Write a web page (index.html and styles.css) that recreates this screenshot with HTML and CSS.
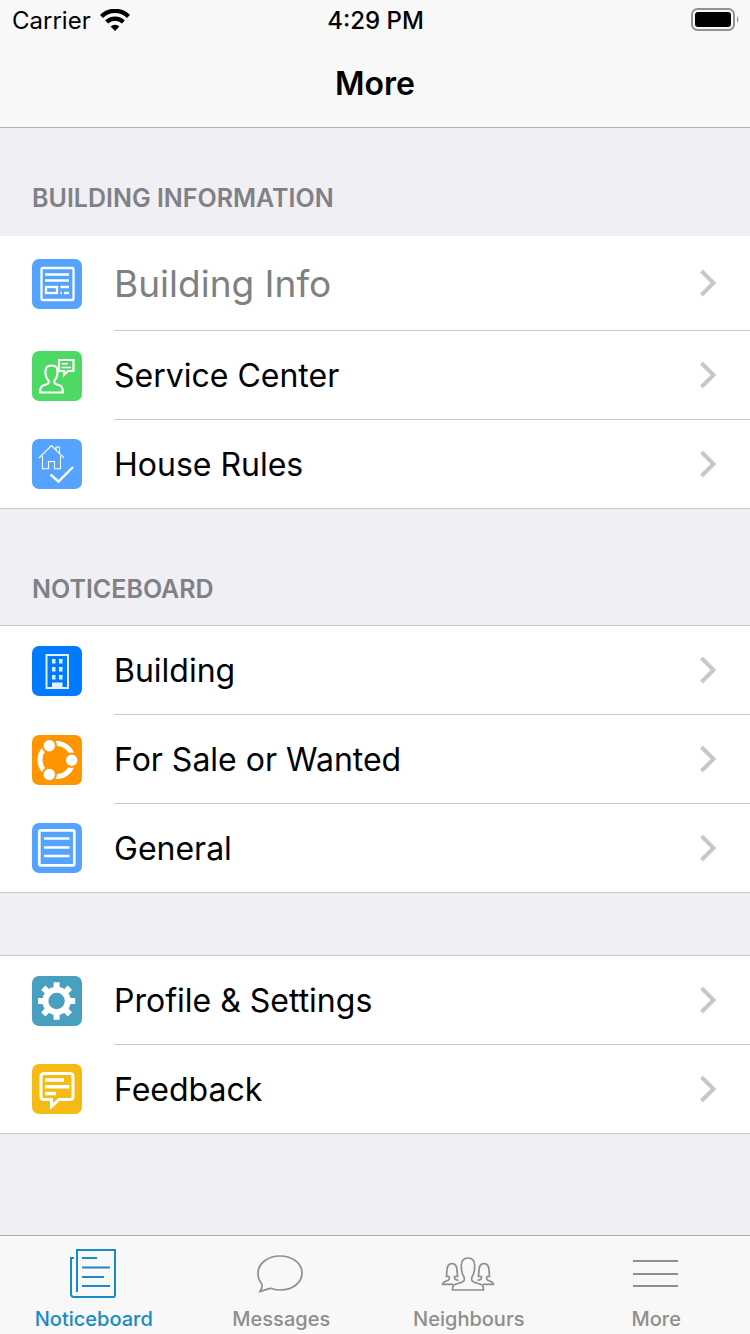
FILE: index.html
```html
<!DOCTYPE html>
<html lang="en">
<head>
    <meta charset="UTF-8">
    <meta name="viewport" content="width=device-width, initial-scale=1.0">
    <title>More</title>
    <link rel="stylesheet" href="styles.css">
</head>
<body>
    <svg class="sprite" aria-hidden="true">
        <symbol id="chevron" viewBox="0 0 20 30">
            <path d="M3.5 3 L15.5 15 L3.5 27" fill="none" stroke="#c7c7cc" stroke-width="4"/>
        </symbol>
    </svg>

    <header class="header">
        <div class="status-bar">
            <div class="carrier">
                <span>Carrier</span>
                <svg width="30" height="22" viewBox="0 0 30 22">
                    <path d="M1.5 7.5 A19 19 0 0 1 28.5 7.5" fill="none" stroke="#000" stroke-width="4.4"/>
                    <path d="M6.6 13 A12 12 0 0 1 23.4 13" fill="none" stroke="#000" stroke-width="4.2"/>
                    <path d="M15 22 L10.6 17.4 A6.5 6.5 0 0 1 19.4 17.4 Z"/>
                </svg>
            </div>
            <div class="time">4:29 PM</div>
            <div class="battery">
                <svg width="48" height="24" viewBox="0 0 48 24">
                    <rect x="1" y="1" width="42" height="21" rx="5.5" fill="none" stroke="#929292" stroke-width="2"/>
                    <rect x="4" y="4" width="36" height="15" rx="3"/>
                    <path d="M46 8 A5 5 0 0 1 46 15 Z" fill="#929292"/>
                </svg>
            </div>
        </div>
        <h1>More</h1>
    </header>

    <main>
        <h2>BUILDING INFORMATION</h2>
        <ul class="list list-first">
            <li>
                <a class="row row-large" href="#">
                    <svg class="icon blue" viewBox="0 0 50 50" fill="none" stroke="#fff" stroke-width="2.3">
                        <rect x="9.5" y="9" width="32" height="32" rx="1.5"/>
                        <path d="M13 15.5 H37 M13 21.5 H37 M28.5 28 H37 M32 34 H37"/>
                        <path d="M28.5 34 H30"/>
                        <rect x="14" y="28" width="11" height="6"/>
                    </svg>
                    <span class="row-body">Building Info <svg class="chevron"><use href="#chevron"/></svg></span>
                </a>
            </li>
            <li>
                <a class="row" href="#">
                    <svg class="icon green" viewBox="0 0 50 50" fill="none" stroke="#fff" stroke-width="2.2">
                        <path d="M8 41.5 C8 36 10 34.5 14 33.5 C17 32.7 17 31 16.5 29.5 C14 27 13.4 24 13.4 20.5 C13.4 16.5 16 14.5 19.5 14.5 C23 14.5 25.6 16.5 25.6 20.5 C25.6 24 25 27 22.5 29.5 C22 31 22 32.7 25 33.5 C29 34.5 31 36 31 41.5 Z"/>
                        <path d="M27 9 H41.5 V20 H36 L32 24 V20 H27 Z"/>
                        <path d="M29.5 12.7 H36 M29.5 16.5 H39" stroke-width="1.5"/>
                    </svg>
                    <span class="row-body">Service Center <svg class="chevron"><use href="#chevron"/></svg></span>
                </a>
            </li>
            <li>
                <a class="row" href="#">
                    <svg class="icon blue" viewBox="0 0 50 50" fill="none" stroke="#fff" stroke-width="1.1">
                        <path d="M7 19 L19.5 6.5 L32 19 M10.5 17 V29.8 H16.5 V22.5 H22.5 V29.8 H28.5 V17 M24 10.5 V8 H27.5 V14"/>
                        <path d="M18.5 35.5 L26.5 42.5 L41 28" stroke-width="2.4"/>
                    </svg>
                    <span class="row-body">House Rules <svg class="chevron"><use href="#chevron"/></svg></span>
                </a>
            </li>
        </ul>

        <h2 class="second">NOTICEBOARD</h2>
        <ul class="list">
            <li>
                <a class="row" href="#">
                    <svg class="icon royal" viewBox="0 0 50 50" fill="#e2effd">
                        <path d="M13.5 8 H37 V43 H13.5 Z M15.5 10 V41 H35 V10 Z" fill-rule="evenodd"/>
                        <path d="M20 13 h3.5 v4.5 h-3.5 Z M27 13 h3.5 v4.5 h-3.5 Z M20 21 h3.5 v4.5 h-3.5 Z M27 21 h3.5 v4.5 h-3.5 Z M20 29 h3.5 v4.5 h-3.5 Z M27 29 h3.5 v4.5 h-3.5 Z M20 36.5 h10.5 v5 h-10.5 Z"/>
                    </svg>
                    <span class="row-body">Building <svg class="chevron"><use href="#chevron"/></svg></span>
                </a>
            </li>
            <li>
                <a class="row" href="#">
                    <svg class="icon orange" viewBox="0 0 50 50">
                        <circle cx="24.5" cy="25" r="16.5" fill="none" stroke="#fff" stroke-width="5"/>
                        <g fill="#fff" stroke="#ff9500" stroke-width="2">
                            <circle cx="17.3" cy="10.8" r="6.7"/>
                            <circle cx="39.7" cy="25.3" r="6.7"/>
                            <circle cx="17.3" cy="39.5" r="6.7"/>
                        </g>
                    </svg>
                    <span class="row-body">For Sale or Wanted <svg class="chevron"><use href="#chevron"/></svg></span>
                </a>
            </li>
            <li>
                <a class="row" href="#">
                    <svg class="icon blue" viewBox="0 0 50 50" fill="none" stroke="#fff" stroke-width="2.7">
                        <rect x="7.3" y="7.3" width="35" height="35" rx="1.5"/>
                        <path d="M12 15.5 H37.5 M12 24.5 H37.5 M12 33 H37.5"/>
                    </svg>
                    <span class="row-body">General <svg class="chevron"><use href="#chevron"/></svg></span>
                </a>
            </li>
        </ul>

        <ul class="list list-last">
            <li>
                <a class="row" href="#">
                    <svg class="icon teal" viewBox="0 0 50 50" fill="none" stroke="#fff">
                        <circle cx="24.6" cy="25" r="11.2" stroke-width="6"/>
                        <g stroke-width="6">
                            <path d="M24.6 6.3 V12 M24.6 38 V43.7 M6 25 H12 M37.5 25 H43.2"/>
                            <path d="M11.3 11.7 L16 16.4 M33.2 33.6 L37.9 38.3 M11.3 38.3 L16 33.6 M33.2 16.4 L37.9 11.7"/>
                        </g>
                    </svg>
                    <span class="row-body">Profile &amp; Settings <svg class="chevron"><use href="#chevron"/></svg></span>
                </a>
            </li>
            <li>
                <a class="row" href="#">
                    <svg class="icon yellow" viewBox="0 0 50 50" fill="none" stroke="#fff" stroke-width="3">
                        <path d="M12 9.5 H38 Q41 9.5 41 12.5 V32.5 Q41 35.5 38 35.5 H27 L19.5 42.5 V35.5 H12 Q9 35.5 9 32.5 V12.5 Q9 9.5 12 9.5 Z"/>
                        <path d="M13 16 H32 M13 22.7 H37.5 M13 29.5 H24" stroke-width="3.6"/>
                    </svg>
                    <span class="row-body">Feedback <svg class="chevron"><use href="#chevron"/></svg></span>
                </a>
            </li>
        </ul>
    </main>

    <nav class="tab-bar">
        <a class="tab active" href="#">
            <svg width="56" height="52" viewBox="1 0 56 52" fill="none" stroke="currentColor" stroke-width="2">
                <path d="M12 44 V2 H50 V47 Q50 49 48 49 H9 Q6 49 6 46 V10 H9"/>
                <path d="M17 10 H32 M17 19.5 H45 M17 29 H39 M17 38 H45"/>
            </svg>
            Noticeboard
        </a>
        <a class="tab" href="#">
            <svg width="56" height="52" viewBox="1 0 56 52" fill="none" stroke="currentColor" stroke-width="1.7">
                <path d="M8 43.5 C10 40.5 10.5 38.5 9.8 36 C7.3 33 6 29.5 6 25.5 C6 15.5 15.5 8 28 8 C40.5 8 50 15.5 50 25 C50 35 40.5 42 28 42 C24.5 42 21.5 41.5 18.5 40.3 C15.5 40.8 12 42.5 8 43.5 Z"/>
            </svg>
            Messages
        </a>
        <a class="tab" href="#">
            <svg width="56" height="52" viewBox="1 0 56 52" fill="none" stroke="currentColor" stroke-width="1.7">
                <path d="M12.5 42 C12.5 37 14 36.3 18 35.5 C24 34 25 33 24 29 C21.7 25.5 21.3 22 21.3 18 C21.3 12.5 24 10 28 10 C32 10 34.7 12.5 34.7 18 C34.7 22 34.3 25.5 32 29 C31 33 32 34 38 35.5 C42 36.3 43.5 37 43.5 42 Z"/>
                <path d="M13 36.3 H2.5 C3 33.5 5.5 33.5 8.5 32 C9.5 31 9.5 29.5 9 28.5 H6.5 C7 22 6.5 15.5 12 15.5 C17.5 15.5 17 22 17.5 28.5 H14.5 C14.5 31.5 15 31.5 18.5 32.5"/>
                <path d="M43 36.3 H53.5 C53 33.5 50.5 33.5 47.5 32 C46.5 31 46.5 29.5 47 28.5 H49.5 C49 22 49.5 15.5 44 15.5 C38.5 15.5 39 22 38.5 28.5 H41.5 C41.5 31.5 41 31.5 37.5 32.5"/>
            </svg>
            Neighbours
        </a>
        <a class="tab" href="#">
            <svg width="56" height="52" viewBox="0 0 56 52" fill="none" stroke="currentColor" stroke-width="2">
                <path d="M5 13 H50 M5 26 H50 M5 38 H50"/>
            </svg>
            More
        </a>
    </nav>
</body>
</html>
```
FILE: styles.css
```css
* {
    box-sizing: border-box;
}

body {
    margin: 0;
    min-height: 100vh;
    display: flex;
    flex-direction: column;
    background-color: #efeff4;
    color: #000;
    font-family: Inter, "Liberation Sans", sans-serif;
}

a {
    color: inherit;
    text-decoration: none;
}

.sprite {
    display: none;
}

/* Header */
.header {
    background-color: #f8f8f8;
    border-bottom: 1px solid #b2b2b2;
}

.status-bar {
    display: grid;
    grid-template-columns: 1fr auto 1fr;
    align-items: center;
    height: 40px;
    padding: 0 11px 0 12px;
    font-size: 24px;
}

.carrier {
    display: flex;
    align-items: center;
    gap: 9px;
}

.time {
    font-weight: 500;
}

.battery {
    display: flex;
    justify-content: flex-end;
}

h1 {
    margin: 0;
    height: 87px;
    line-height: 87px;
    text-align: center;
    font-size: 32px;
    font-weight: 600;
}

/* Lists */
main {
    flex: 1;
}

h2 {
    margin: 0;
    padding: 54px 32px 22px;
    color: #808085;
    font-size: 25px;
    line-height: 32px;
    font-weight: 600;
}

h2.second {
    padding-top: 64px;
    padding-bottom: 20px;
}

.list {
    margin: 0;
    padding: 0;
    list-style: none;
    background-color: #fff;
    border-top: 1px solid #c8c7cc;
    border-bottom: 1px solid #c8c7cc;
}

.list-first {
    border-top: none;
}

.list-last {
    margin-top: 62px;
}

.row {
    display: flex;
    align-items: center;
    gap: 32px;
    padding-left: 32px;
    font-size: 32px;
}

.row-body {
    flex: 1;
    display: flex;
    align-items: center;
    justify-content: space-between;
    height: 89px;
    padding-right: 32px;
    border-bottom: 1px solid #c8c7cc;
}

.row-large {
    color: #808080;
    font-size: 37px;
}

.row-large .row-body {
    height: 95px;
}

li:last-child .row-body {
    height: 88px;
    border-bottom: none;
}

.icon {
    width: 50px;
    height: 50px;
    border-radius: 7px;
}

.chevron {
    width: 20px;
    height: 30px;
}

.blue {
    background-color: #54a3ff;
}

.green {
    background-color: #4cd964;
}

.royal {
    background-color: #007aff;
}

.orange {
    background-color: #ff9500;
}

.teal {
    background-color: #46a0be;
}

.yellow {
    background-color: #f5bb14;
}

/* Tab bar */
.tab-bar {
    position: sticky;
    bottom: 0;
    display: grid;
    grid-template-columns: repeat(4, 1fr);
    height: 99px;
    background-color: #f8f8f8;
    border-top: 1px solid #acacac;
}

.tab {
    display: flex;
    flex-direction: column;
    align-items: center;
    gap: 6px;
    padding-top: 12px;
    color: #8e8e8e;
    font-size: 20px;
    line-height: 26px;
    font-weight: 500;
}

.tab.active {
    color: #178bc6;
}
```
